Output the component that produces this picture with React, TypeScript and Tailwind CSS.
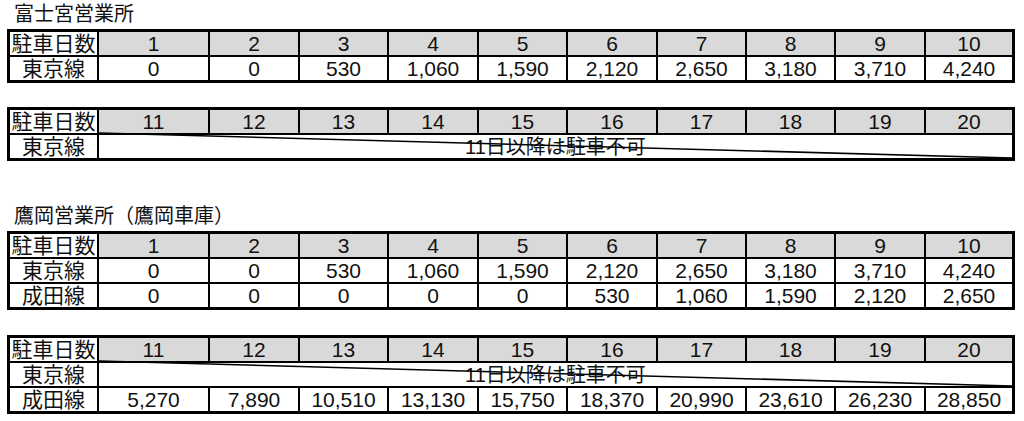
import React from "react";

const font = "[font-family:'Liberation_Sans','Noto_Sans_CJK_JP',sans-serif]";

const gridCols =
  "grid-cols-[87px_109px_88px_87px_88px_87px_88px_87px_87px_88px_86px]";

type Row = { label: string; values: (number | null)[] };

const fmt = (n: number) => n.toLocaleString("en-US");

const Cell: React.FC<{ children?: React.ReactNode; head?: boolean }> = ({ children, head }) => (
  <div
    className={`h-[23px] flex items-center justify-center text-[21px] leading-[23px] text-[#111] ${
      head ? "bg-[#d9d9d9]" : "bg-white"
    }`}
  >
    {children}
  </div>
);

const NoParking: React.FC = () => (
  <div className="relative col-span-10 h-[23px] bg-white flex items-center justify-center text-[20px] leading-[23px] text-[#111]">
    <span className="pt-[2px]">11日以降は駐車不可</span>
    <svg
      className="absolute left-0 top-[-2px] w-full h-[25px] overflow-visible"
      viewBox="0 0 100 100"
      preserveAspectRatio="none"
    >
      <line x1="0" y1="0" x2="100" y2="100" stroke="#000" strokeWidth="1.6" vectorEffect="non-scaling-stroke" />
    </svg>
  </div>
);

const FeeTable: React.FC<{ days: number[]; rows: Row[] }> = ({ days, rows }) => (
  <div className={`grid ${gridCols} gap-[2px] bg-black p-[3px] w-fit ml-[7px]`}>
    <Cell>駐車日数</Cell>
    {days.map((d) => (
      <Cell key={d} head>
        {d}
      </Cell>
    ))}
    {rows.map((r) => (
      <React.Fragment key={r.label}>
        <Cell>{r.label}</Cell>
        {r.values[0] === null ? (
          <NoParking />
        ) : (
          r.values.map((v, i) => <Cell key={i}>{fmt(v as number)}</Cell>)
        )}
      </React.Fragment>
    ))}
  </div>
);

const Title: React.FC<{ children: React.ReactNode }> = ({ children }) => (
  <div className="h-[29px] pl-[14px] text-[20px] leading-[29px] text-[#111]">{children}</div>
);

const first = [1, 2, 3, 4, 5, 6, 7, 8, 9, 10];
const second = [11, 12, 13, 14, 15, 16, 17, 18, 19, 20];
const none = Array(10).fill(null);

export default function App() {
  return (
    <div className={`w-[1024px] h-[421px] bg-white overflow-hidden ${font}`}>
      <Title>富士宮営業所</Title>
      <FeeTable
        days={first}
        rows={[{ label: "東京線", values: [0, 0, 530, 1060, 1590, 2120, 2650, 3180, 3710, 4240] }]}
      />
      <div className="h-[24px]" />
      <FeeTable days={second} rows={[{ label: "東京線", values: none }]} />
      <div className="h-[41px]" />
      <Title>鷹岡営業所（鷹岡車庫）</Title>
      <FeeTable
        days={first}
        rows={[
          { label: "東京線", values: [0, 0, 530, 1060, 1590, 2120, 2650, 3180, 3710, 4240] },
          { label: "成田線", values: [0, 0, 0, 0, 0, 530, 1060, 1590, 2120, 2650] },
        ]}
      />
      <div className="h-[25px]" />
      <FeeTable
        days={second}
        rows={[
          { label: "東京線", values: none },
          { label: "成田線", values: [5270, 7890, 10510, 13130, 15750, 18370, 20990, 23610, 26230, 28850] },
        ]}
      />
    </div>
  );
}
